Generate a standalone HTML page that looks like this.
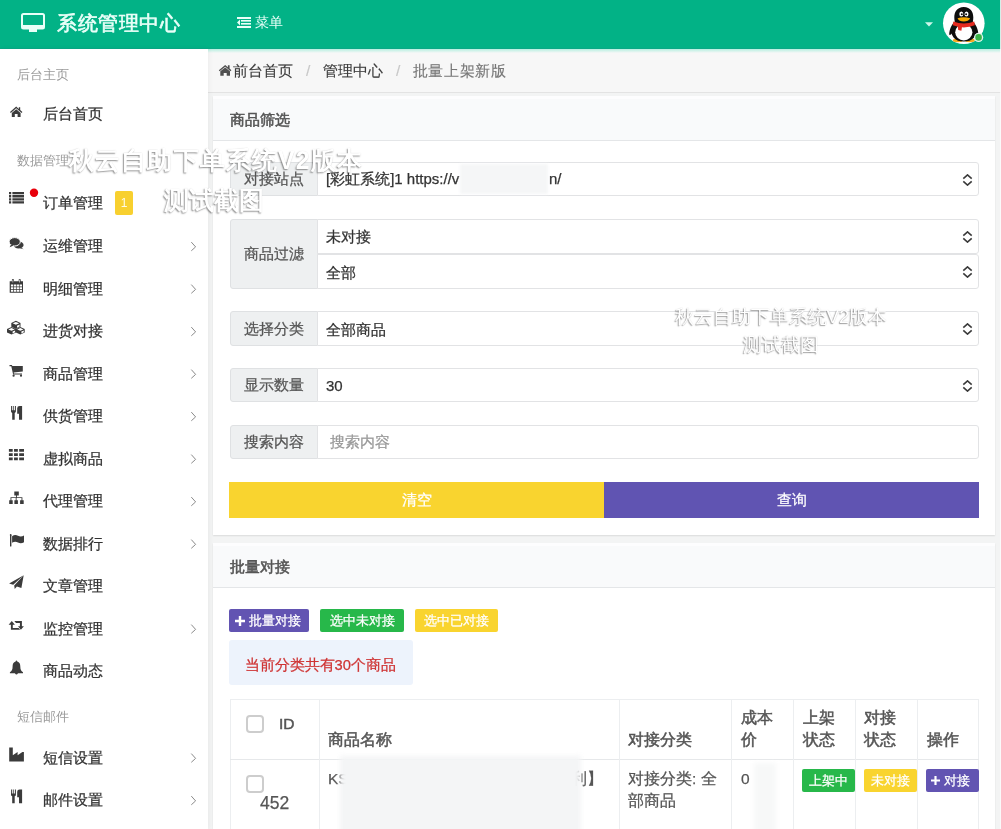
<!DOCTYPE html>
<html><head><meta charset="utf-8">
<style>
*{box-sizing:border-box;margin:0;padding:0}
html,body{width:1001px;height:829px;overflow:hidden}
body{position:relative;background:#f3f4f4;font-family:"Liberation Sans",sans-serif;color:#333;font-size:15px}
#root{position:absolute;left:0;top:0;width:1001px;height:829px;will-change:transform;-webkit-text-stroke-width:0.25px}
.abs{position:absolute}
#hdr{left:0;top:0;width:1001px;height:49px;background:#02b286}
#side{left:0;top:49px;width:208px;height:780px;background:#fff;box-shadow:1px 0 5px rgba(0,0,0,0.05);z-index:1}
#bc{left:208px;top:49px;width:793px;height:44px;background:#f7f7f7;border-bottom:1.5px solid #e3e3e3}
.bct{position:absolute;top:13px;line-height:18px;font-size:15.4px;color:#3c3c3c;white-space:nowrap;-webkit-text-stroke-width:0.15px}
.panel{background:#fff;left:213px;width:782px;box-shadow:0 1px 1.5px rgba(0,0,0,0.1)}
.ph{position:absolute;left:0;top:0;width:100%;height:44.5px;background:#f9fafb;border-bottom:1.5px solid #e4e6e8;border-top:3px solid #fdfdfe}
.ph span{position:absolute;left:17px;top:12px;font-size:15px;color:#555;line-height:18px;-webkit-text-stroke-width:0.55px}
.sh{position:absolute;left:17px;font-size:13px;color:#9a9a9a;line-height:14px;-webkit-text-stroke-width:0}
.it{position:absolute;left:43px;font-size:15.2px;color:#333;line-height:16px}
.ic{position:absolute;left:8px;width:18px;height:16px}
.chev{position:absolute;left:190px;width:7px;height:9px}
.addon{position:absolute;left:17px;width:88px;background:#eef0f1;border:1px solid #dfe1e3;border-radius:3px 0 0 3px;color:#555;font-size:15px}
.addon span{position:absolute;left:0;width:100%;text-align:center;line-height:18px}
.sel{position:absolute;left:104px;width:662px;background:#fff;border:1px solid #e2e3e5;border-radius:0 3px 3px 0;font-size:15px;color:#333}
.sel .t{position:absolute;left:8px;top:7px;line-height:18px;white-space:nowrap}
.arr{position:absolute;left:643.5px;top:11px}
.redact{position:absolute;background:#f4f5f6;filter:blur(2px)}
.bigbtn{position:absolute;top:386px;height:36px;color:#fff;font-size:15px;line-height:36px;text-align:center}
.btn{position:absolute;font-size:13.2px;color:#fff;text-align:center;line-height:23px;height:23px;border-radius:2px}
.wm{position:absolute;z-index:2;font-weight:bold;color:#fff;-webkit-text-stroke-width:0;text-shadow:-1px 1px 1.5px rgba(0,0,0,0.42),0 0 1px rgba(0,0,0,0.12);white-space:nowrap;line-height:1}
td,th{font-weight:normal}
.tl{position:absolute;font-size:15px;color:#444;line-height:22px}
.vl{position:absolute;top:154px;width:1px;height:140px;background:#eceef0}
.cb{position:absolute;width:18px;height:18px;border:2px solid #cdcdcd;border-radius:4px;background:#fff}
.th{position:absolute;font-size:15.5px;color:#555;line-height:22px;-webkit-text-stroke-width:0.5px}
.td{position:absolute;font-size:15.5px;color:#555;line-height:22px}
.lbl{position:absolute;height:23px;line-height:23px;font-size:13.2px;color:#fff;text-align:center;border-radius:2px}
</style></head><body><div id="root">

<!-- header -->
<div id="hdr" class="abs">
  <svg class="abs" style="left:21px;top:13px" width="24" height="20" viewBox="0 0 24 20">
    <rect x="1" y="1" width="22" height="14.5" rx="1.5" fill="none" stroke="#e9fff8" stroke-width="2"/>
    <rect x="1" y="12" width="22" height="4" fill="#e9fff8"/>
    <rect x="8" y="16" width="8" height="3" fill="#e9fff8"/>
  </svg>
  <div class="abs" style="left:57px;top:11px;font-size:20px;color:#e9fff8;line-height:24px;letter-spacing:0.5px;-webkit-text-stroke-width:0.6px">系统管理中心</div>
  <svg class="abs" style="left:237px;top:17px" width="14" height="11" viewBox="0 0 14 11">
    <rect x="0" y="0" width="14" height="2" fill="#e9fff8"/>
    <rect x="4" y="3" width="10" height="1.6" fill="#e9fff8"/>
    <rect x="4" y="6" width="10" height="1.6" fill="#e9fff8"/>
    <rect x="0" y="9" width="14" height="2" fill="#e9fff8"/>
    <path d="M3 2.5 L0 5.5 L3 8.5Z" fill="#e9fff8"/>
  </svg>
  <div class="abs" style="left:255px;top:14px;font-size:14px;color:#e9fff8;line-height:17px;-webkit-text-stroke-width:0">菜单</div>
  <svg class="abs" style="left:924.5px;top:21.5px" width="8" height="5" viewBox="0 0 8 5"><path d="M0 0.3H8L4 4.6Z" fill="#cdf7ea"/></svg>
  <div class="abs" style="left:0;top:47.5px;width:1001px;height:1.5px;background:#0aa886"></div>
  <!-- avatar -->
  <svg class="abs" style="left:942px;top:2px" width="46" height="46" viewBox="0 0 46 46">
    <circle cx="21.8" cy="21.2" r="20.8" fill="#fff"/>
    <ellipse cx="15.8" cy="38.3" rx="5" ry="1.9" fill="#f4a81d"/>
    <ellipse cx="27.8" cy="38.3" rx="5" ry="1.9" fill="#f4a81d"/>
    <path d="M21.8 4.9 C15 4.9 12.3 10 12.3 15.5 C12.3 17 12.5 18.5 12.8 19.5 C10 22 7.5 27 7.2 32 C7.2 33.5 8.2 33.5 9.5 31.5 C10 33 11 34.8 12 36 C14 38.5 17.5 39.5 21.8 39.5 C26 39.5 29.6 38.5 31.6 36 C32.6 34.8 33.6 33 34.1 31.5 C35.4 33.5 36.4 33.5 36.4 32 C36.1 27 33.6 22 30.8 19.5 C31.1 18.5 31.3 17 31.3 15.5 C31.3 10 28.6 4.9 21.8 4.9Z" fill="#0d0d0d"/>
    <ellipse cx="21.8" cy="30.3" rx="8.6" ry="8.2" fill="#fff"/>
    <ellipse cx="19.3" cy="11.9" rx="2" ry="2.5" fill="#fff"/>
    <ellipse cx="24.5" cy="11.9" rx="2" ry="2.5" fill="#fff"/>
    <circle cx="19.8" cy="12.2" r="1" fill="#111"/>
    <circle cx="24.1" cy="12.2" r="1" fill="#111"/>
    <path d="M15.5 16.3 Q21.8 14.3 28.1 16.3 Q26.5 19.5 21.8 19.6 Q17 19.5 15.5 16.3Z" fill="#f5a700"/>
    <path d="M11.3 19.6 Q21.8 23.6 32.3 19.6 L32.8 23.3 Q21.8 27.6 10.8 23.3Z" fill="#e52a1f"/>
    <path d="M15.8 23.8 L20 24.8 L19.4 28.8 L16.2 28Z" fill="#e52a1f"/>
    <circle cx="36.6" cy="35.4" r="4.6" fill="#dff5ee"/>
    <circle cx="36.6" cy="35.4" r="3.3" fill="#3bb449"/>
  </svg>
</div>

<!-- sidebar -->
<div id="side" class="abs">
<div class="sh" style="top:18.5px">后台主页</div>
<div class="sh" style="top:105.0px">数据管理</div>
<div class="sh" style="top:661.3px">短信邮件</div>
<div class="it" style="top:57.0px">后台首页</div>
<div class="it" style="top:145.5px">订单管理</div>
<div class="it" style="top:189.0px">运维管理</div>
<div class="it" style="top:231.5px">明细管理</div>
<div class="it" style="top:274.0px">进货对接</div>
<div class="it" style="top:316.5px">商品管理</div>
<div class="it" style="top:359.0px">供货管理</div>
<div class="it" style="top:401.5px">虚拟商品</div>
<div class="it" style="top:444.0px">代理管理</div>
<div class="it" style="top:486.5px">数据排行</div>
<div class="it" style="top:529.0px">文章管理</div>
<div class="it" style="top:571.5px">监控管理</div>
<div class="it" style="top:614.0px">商品动态</div>
<div class="it" style="top:700.5px">短信设置</div>
<div class="it" style="top:743.0px">邮件设置</div>
<svg class="abs" style="left:0;top:0" width="208" height="780" viewBox="0 49 208 780"><g fill="#3b3b3b">
<path d="M16.2 106.6 L10 112 L10.8 112.9 L16.2 108.3 L21.6 112.9 L22.4 112 L20.2 110.1 V107.3 H18.8 V108.9 Z M11.8 112.9 L16.2 109.2 L20.6 112.9 V116.9 H17.6 V114 H14.8 V116.9 H11.8 Z"/>
<path d="M9 192h2.2v2.3H9z M12.4 192H24v2.3H12.4z M9 195.1h2.2v2.3H9z M12.4 195.1H24v2.3H12.4z M9 198.2h2.2v2.3H9z M12.4 198.2H24v2.3H12.4z M9 201.3h2.2v2.3H9z M12.4 201.3H24v2.3H12.4z"/>
<ellipse cx="18.6" cy="245" rx="5" ry="3.5"/>
<path d="M21 247.5 L23.6 249.2 L20 248.3Z"/>
<ellipse cx="14.7" cy="241.8" rx="5.6" ry="4.2" stroke="#fff" stroke-width="1"/>
<path d="M11 244.5 L9.6 247.3 L13.6 245.6Z"/>
<path fill-rule="evenodd" d="M9.7 281.2h13.3v11.6H9.7z M10.9 284.6h2.3v1.8h-2.3z M13.9 284.6h2.3v1.8h-2.3z M16.8 284.6h2.3v1.8h-2.3z M19.7 284.6h2.3v1.8h-2.3z M10.9 287.2h2.3v1.8h-2.3z M13.9 287.2h2.3v1.8h-2.3z M16.8 287.2h2.3v1.8h-2.3z M19.7 287.2h2.3v1.8h-2.3z M10.9 289.8h2.3v1.9h-2.3z M13.9 289.8h2.3v1.9h-2.3z M16.8 289.8h2.3v1.9h-2.3z M19.7 289.8h2.3v1.9h-2.3z"/>
<rect x="11.9" y="278.9" width="2" height="4.3" rx="0.8"/><rect x="18.7" y="278.9" width="2" height="4.3" rx="0.8"/>
<path d="M12.6 279.8h0.6v2.6h-0.6z M19.4 279.8h0.6v2.6h-0.6z" fill="#fff"/>
<path d="M15.9 320.8 L20.5 322.9 V326.8 L15.9 328.9 L11.3 326.8 V322.9Z"/>
<path d="M15.9 321.9 L19.2 323.3 L15.9 324.8 L12.6 323.3Z M17 325.8 L19.6 324.5 V326.4 L17 327.8Z" fill="#fff"/>
<path d="M11.5 327 L16 329 V332.6 L11.5 334.6 L7 332.6 V329Z"/>
<path d="M11.5 328.1 L14.7 329.4 L11.5 330.8 L8.3 329.4Z M12.6 331.6 L15.1 330.4 V332.2 L12.6 333.5Z" fill="#fff"/>
<path d="M20.3 327 L24.7 329 V332.6 L20.3 334.6 L15.9 332.6 V329Z"/>
<path d="M20.3 328.1 L23.4 329.4 L20.3 330.8 L17.2 329.4Z M21.4 331.6 L23.8 330.4 V332.2 L21.4 333.5Z" fill="#fff"/>
<path d="M9.5 364.9 H11.8 L12.4 366 H22.8 V371.6 L13.7 372.6 L13.9 373.5 H22 V374.5 H13.1 L11.3 366.2 H9.5Z"/>
<circle cx="13.6" cy="375.7" r="1.1"/><circle cx="21" cy="375.7" r="1.1"/>
<g id="cut"><path d="M11 406h0.9v4.5H11z M12.8 406h0.9v4.5h-0.9z M14.9 406h1v4.5h-1z M11 410.2H15.9V411.6Q15.9 412.5 14.7 412.9V419.8H12.2V412.9Q11 412.5 11 411.6Z"/>
<path d="M22.1 406V419.8H19V413.8H17.2V408.3Q17.2 406 19.6 406Z"/></g>
<path d="M8.9 449h3.8v2.8H8.9z M14.05 449h3.8v2.8h-3.8z M19.2 449H24v2.8h-4.8z M8.9 453.2h3.8V456H8.9z M14.05 453.2h3.8V456h-3.8z M19.2 453.2H24V456h-4.8z M8.9 457.4h3.8v2.8H8.9z M14.05 457.4h3.8v2.8h-3.8z M19.2 457.4H24v2.8h-4.8z"/>
<path d="M14.3 491.4h4.5v4.1h-4.5z M16.1 495.4h0.9v2h-0.9z M10.5 497.2h11.9v0.9H10.5z M10.5 497.2h0.9v3.1h-0.9z M15.7 497.2h0.9v3.1h-0.9z M21.5 497.2h0.9v3.1h-0.9z M9.2 500.2h3.5v3.7H9.2z M14.4 500.2h3.5v3.7h-3.5z M20.1 500.2h3.6v3.7h-3.6z"/>
<rect x="10" y="534.8" width="1.4" height="11.7" rx="0.6"/><circle cx="10.7" cy="534.9" r="0.9"/>
<path d="M12.1 536.2 Q15 534.2 18 535.8 Q21 537.3 24 535.5 V542.2 Q21 544 18 542.5 Q15 541 12.1 542.8Z"/>
<path d="M23.7 575.2 L9.1 583.5 L13.2 584.8Z M23.7 575.2 L14.2 585.6 L14.7 589.1 L16.9 586.5 L21.4 588.1Z"/>
<path d="M8.6 624.7 L11.8 621.1 L14.9 624.7 H12.8 V627.9 H18.6 L20.2 629.8 H10.9 V624.7Z M14.3 621 H21.9 V626.3 H23.9 L20.9 629.8 L18 626.3 H19.9 V622.9 H16Z"/>
<path d="M16.45 660.4 C17.2 660.4 17.3 661.2 17.2 661.6 C19.5 662.1 20.3 664.1 20.3 666.6 C20.3 669.6 21 671.1 23 672.3 V673.2 H9.9 V672.3 C11.9 671.1 12.6 669.6 12.6 666.6 C12.6 664.1 13.4 662.1 15.7 661.6 C15.6 661.2 15.7 660.4 16.45 660.4Z M14.9 673.3 Q16.45 675.9 18 673.3Z"/>
<path d="M9.2 747.6 H12.8 V755.2 L17.6 752 V755.2 L22.4 752 H23.9 V761.5 H9.2Z"/>
<use href="#cut" y="383.4"/>
</g><path d="M191.3 242.1 L195.6 246.9 L191.3 250.8" fill="none" stroke="#8a8a8a" stroke-width="1"/><path d="M191.3 284.6 L195.6 289.4 L191.3 293.3" fill="none" stroke="#8a8a8a" stroke-width="1"/><path d="M191.3 327.1 L195.6 331.9 L191.3 335.8" fill="none" stroke="#8a8a8a" stroke-width="1"/><path d="M191.3 369.6 L195.6 374.4 L191.3 378.3" fill="none" stroke="#8a8a8a" stroke-width="1"/><path d="M191.3 412.1 L195.6 416.9 L191.3 420.8" fill="none" stroke="#8a8a8a" stroke-width="1"/><path d="M191.3 454.6 L195.6 459.4 L191.3 463.3" fill="none" stroke="#8a8a8a" stroke-width="1"/><path d="M191.3 497.1 L195.6 501.9 L191.3 505.8" fill="none" stroke="#8a8a8a" stroke-width="1"/><path d="M191.3 539.6 L195.6 544.4 L191.3 548.3" fill="none" stroke="#8a8a8a" stroke-width="1"/><path d="M191.3 624.6 L195.6 629.4 L191.3 633.3" fill="none" stroke="#8a8a8a" stroke-width="1"/><path d="M191.3 753.6 L195.6 758.4 L191.3 762.3" fill="none" stroke="#8a8a8a" stroke-width="1"/><path d="M191.3 796.1 L195.6 800.9 L191.3 804.8" fill="none" stroke="#8a8a8a" stroke-width="1"/><circle cx="34" cy="192.8" r="4.2" fill="#e8000b"/></svg>
<div class="abs" style="left:115px;top:142px;width:18px;height:24px;background:#f8d02f;border-radius:2px;color:#fffbe6;font-size:12px;line-height:24px;text-align:center;-webkit-text-stroke-width:0">1</div>
</div>

<!-- breadcrumb -->
<div id="bc" class="abs">
  <svg class="abs" style="left:10px;top:15px" width="14" height="12" viewBox="218 64 14 12"><path id="homep" d="M218.8 70.3 L225.2 64.9 L227.9 67.2 V65.2 H229.6 V68.6 L231.4 70.3 L230.6 71.2 L225.2 66.7 L219.6 71.2Z M220.3 71.3 L225.2 67.5 L230 71.3 V75.7 H226.7 V73 H223.7 V75.7 H220.3Z" fill="#505050"/></svg>
  <div class="bct" style="left:25px">前台首页</div>
  <div class="bct" style="left:98px;color:#c8c8c8">/</div>
  <div class="bct" style="left:115px">管理中心</div>
  <div class="bct" style="left:188px;color:#c8c8c8">/</div>
  <div class="bct" style="left:204.5px;color:#777;letter-spacing:0.7px">批量上架新版</div>
</div>

<div class="abs" style="left:0;top:49px;width:1001px;height:4px;background:linear-gradient(#b5efe0,rgba(246,246,246,0))"></div>

<!-- panel 1 -->
<div class="abs panel" style="top:96px;height:439px">
  <div class="ph"><span>商品筛选</span></div>
  <div class="addon" style="top:66px;height:34px"><span style="top:7px">对接站点</span></div>
  <div class="sel" style="top:66px;height:34px"><span class="t">[彩虹系统]1 https://v</span><span class="t" style="left:231px">n/</span><div class="redact" style="left:142px;top:1px;width:88px;height:30px;background:#f5f6f7;filter:blur(1.5px)"></div><svg class="arr" width="11" height="12" viewBox="0 0 11 12"><path d="M1.3 4.6 L5.5 0.9 L9.7 4.6 M1.3 7.4 L5.5 11.1 L9.7 7.4" fill="none" stroke="#3a3a3a" stroke-width="1.6"/></svg></div>
  <div class="addon" style="top:123px;height:70px"><span style="top:25px">商品过滤</span></div>
  <div class="sel" style="top:123px;height:35px"><span class="t" style="top:8px">未对接</span><svg class="arr" width="11" height="12" viewBox="0 0 11 12"><path d="M1.3 4.6 L5.5 0.9 L9.7 4.6 M1.3 7.4 L5.5 11.1 L9.7 7.4" fill="none" stroke="#3a3a3a" stroke-width="1.6"/></svg></div>
  <div class="sel" style="top:158px;height:35px"><span class="t" style="top:8.5px">全部</span><svg class="arr" width="11" height="12" viewBox="0 0 11 12"><path d="M1.3 4.6 L5.5 0.9 L9.7 4.6 M1.3 7.4 L5.5 11.1 L9.7 7.4" fill="none" stroke="#3a3a3a" stroke-width="1.6"/></svg></div>
  <div class="addon" style="top:215px;height:35px"><span style="top:8px">选择分类</span></div>
  <div class="sel" style="top:215px;height:35px"><span class="t" style="top:8.5px">全部商品</span><svg class="arr" width="11" height="12" viewBox="0 0 11 12"><path d="M1.3 4.6 L5.5 0.9 L9.7 4.6 M1.3 7.4 L5.5 11.1 L9.7 7.4" fill="none" stroke="#3a3a3a" stroke-width="1.6"/></svg></div>
  <div class="addon" style="top:272px;height:34px"><span style="top:7px">显示数量</span></div>
  <div class="sel" style="top:272px;height:34px"><span class="t" style="top:7.7px">30</span><svg class="arr" width="11" height="12" viewBox="0 0 11 12"><path d="M1.3 4.6 L5.5 0.9 L9.7 4.6 M1.3 7.4 L5.5 11.1 L9.7 7.4" fill="none" stroke="#3a3a3a" stroke-width="1.6"/></svg></div>
  <div class="addon" style="top:329px;height:34px"><span style="top:7px">搜索内容</span></div>
  <div class="sel" style="top:329px;height:34px"><span class="t" style="color:#999;left:12px">搜索内容</span></div>
  <div class="bigbtn" style="left:16px;width:375px;background:#f9d42f">清空</div>
  <div class="bigbtn" style="left:391px;width:375px;background:#6054b2">查询</div>
</div>

<!-- panel 2 -->
<div class="abs panel" style="top:543px;height:295px">
  <div class="ph"><span style="top:11.5px">批量对接</span></div>
  <div style="position:absolute;left:0;top:2px;width:100%;height:290px">
  <div class="btn" style="left:16px;top:64px;width:80px;background:#6254b2"><svg style="position:absolute;left:6px;top:7px" width="10" height="10" viewBox="0 0 10 10"><path d="M3.8 0h2.4v3.8H10v2.4H6.2V10H3.8V6.2H0V3.8h3.8z" fill="#fff"/></svg><span style="position:absolute;left:20px">批量对接</span></div>
  <div class="btn" style="left:107px;top:64px;width:84px;background:#27b84a">选中未对接</div>
  <div class="btn" style="left:202px;top:64px;width:83px;background:#f9d42f">选中已对接</div>
  <div id="alert" class="abs" style="left:16px;top:95px;width:184px;height:45px;background:#edf3fc;border-radius:3px;color:#cf3434;font-size:14.7px;line-height:18px;padding:15.5px 0 0 15.5px;white-space:nowrap">当前分类共有30个商品</div>
  <div class="abs" style="left:17px;top:154px;width:749px;height:140px;border:1px solid #eceef0;border-bottom:none"></div>
  <div class="abs" style="left:17px;top:214px;width:749px;height:1px;background:#e6e8ea"></div>
  <div class="vl" style="left:106px"></div>
  <div class="vl" style="left:406px"></div>
  <div class="vl" style="left:518px"></div>
  <div class="vl" style="left:580px"></div>
  <div class="vl" style="left:642px"></div>
  <div class="vl" style="left:704px"></div>
  <div class="cb" style="left:33px;top:170px"></div>
  <div class="th" style="left:66px;top:168px">ID</div>
  <div class="th" style="left:115px;top:184px">商品名称</div>
  <div class="th" style="left:415px;top:184px">对接分类</div>
  <div class="th" style="left:528px;top:162px">成本<br>价</div>
  <div class="th" style="left:590px;top:162px">上架<br>状态</div>
  <div class="th" style="left:651px;top:162px">对接<br>状态</div>
  <div class="th" style="left:714px;top:184px">操作</div>
  <div class="cb" style="left:33px;top:230px"></div>
  <div class="td" style="left:47px;top:247px;font-size:17.5px">452</div>
  <div class="td" style="left:115px;top:223px;width:280px">KS<span style="position:absolute;left:243px;white-space:nowrap">利】</span></div>
  <div class="redact" style="left:127px;top:211px;width:241px;height:90px;background:#f4f5f6;filter:blur(2.5px)"></div>
  <div class="td" style="left:415px;top:223px">对接分类: 全<br>部商品</div>
  <div class="redact" style="left:541px;top:218px;width:22px;height:90px;background:#f7f8f8;filter:blur(2px)"></div>
  <div class="td" style="left:528px;top:223px">0</div>
  <div class="lbl" style="left:589px;top:224px;width:53px;background:#27b84a">上架中</div>
  <div class="lbl" style="left:651px;top:224px;width:53px;background:#f9d42f">未对接</div>
  <div class="lbl" style="left:713px;top:224px;width:53px;background:#6254b2"><svg style="position:absolute;left:5px;top:7px" width="9" height="9" viewBox="0 0 10 10"><path d="M3.8 0h2.4v3.8H10v2.4H6.2V10H3.8V6.2H0V3.8h3.8z" fill="#fff"/></svg><span style="position:absolute;left:18px">对接</span></div>
</div>
</div>

<div class="abs" style="left:1000px;top:0;width:1px;height:829px;background:rgba(250,250,250,0.85);z-index:3"></div>
<!-- watermarks -->
<div class="wm" style="left:66px;top:148px;font-size:25px;width:300px;text-align:center;letter-spacing:1.1px">秋云自助下单系统V2版本</div>
<div class="wm" style="left:64px;top:187.5px;font-size:25px;width:300px;text-align:center">测试截图</div>
<div class="wm" style="left:672px;top:308px;font-size:18.7px;width:218px;text-align:center;font-weight:normal;text-shadow:-1px 1px 1.2px rgba(0,0,0,0.4),0 0 1px rgba(0,0,0,0.15)">秋云自助下单系统V2版本</div>
<div class="wm" style="left:672px;top:336px;font-size:18.7px;width:218px;text-align:center;font-weight:normal;text-shadow:-1px 1px 1.2px rgba(0,0,0,0.4),0 0 1px rgba(0,0,0,0.15)">测试截图</div>
</div></body></html>
